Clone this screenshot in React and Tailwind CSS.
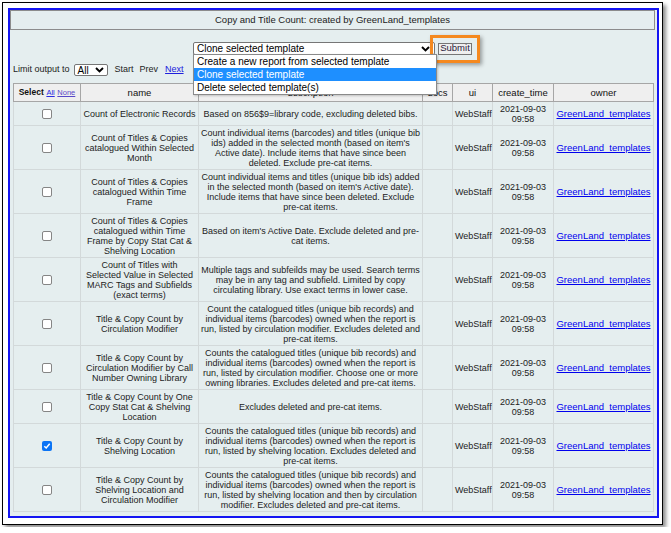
import React from 'react';

const rows = [
  {
    name: ['Count of Electronic Records'],
    desc: ['Based on 856$9=library code, excluding deleted bibs.'],
  },
  {
    name: ['Count of Titles & Copies', 'catalogued Within Selected', 'Month'],
    desc: [
      'Count individual items (barcodes) and titles (unique bib',
      "ids) added in the selected month (based on item's",
      'Active date). Include items that have since been',
      'deleted. Exclude pre-cat items.',
    ],
  },
  {
    name: ['Count of Titles & Copies', 'catalogued Within Time', 'Frame'],
    desc: [
      'Count individual items and titles (unique bib ids) added',
      "in the selected month (based on item's Active date).",
      'Include items that have since been deleted. Exclude',
      'pre-cat items.',
    ],
  },
  {
    name: ['Count of Titles & Copies', 'catalogued within Time', 'Frame by Copy Stat Cat &', 'Shelving Location'],
    desc: ["Based on item's Active Date. Exclude deleted and pre-", 'cat items.'],
  },
  {
    name: ['Count of Titles with', 'Selected Value in Selected', 'MARC Tags and Subfields', '(exact terms)'],
    desc: [
      'Multiple tags and subfeilds may be used. Search terms',
      'may be in any tag and subfield. Limited by copy',
      'circulating library. Use exact terms in lower case.',
    ],
  },
  {
    name: ['Title & Copy Count by', 'Circulation Modifier'],
    desc: [
      'Count the catalogued titles (unique bib records) and',
      'individual items (barcodes) owned when the report is',
      'run, listed by circulation modifier. Excludes deleted and',
      'pre-cat items.',
    ],
  },
  {
    name: ['Title & Copy Count by', 'Circulation Modifier by Call', 'Number Owning Library'],
    desc: [
      'Counts the catalogued titles (unique bib records) and',
      'individual items (barcodes) owned when the report is',
      'run, listed by circulation modifier. Choose one or more',
      'owning libraries. Excludes deleted and pre-cat items.',
    ],
  },
  {
    name: ['Title & Copy Count by One', 'Copy Stat Cat & Shelving', 'Location'],
    desc: ['Excludes deleted and pre-cat items.'],
  },
  {
    name: ['Title & Copy Count by', 'Shelving Location'],
    desc: [
      'Counts the catalogued titles (unique bib records) and',
      'individual items (barcodes) owned when the report is',
      'run, listed by shelving location. Excludes deleted and',
      'pre-cat items.',
    ],
    checked: true,
  },
  {
    name: ['Title & Copy Count by', 'Shelving Location and', 'Circulation Modifier'],
    desc: [
      'Counts the catalogued titles (unique bib records) and',
      'individual items (barcodes) owned when the report is',
      'run, listed by shelving location and then by circulation',
      'modifier. Excludes deleted and pre-cat items.',
    ],
  },
];

// row height by number of text lines
const rowH = { 2: 'h-[24px]', 3: 'h-[34px]', 4: 'h-[44px]' };

const Lines = ({ lines }) => (
  <>
    {lines.map((l, i) => (
      <div key={i} className="whitespace-nowrap">{l}</div>
    ))}
  </>
);

const Chevron = () => (
  <svg width="9" height="6" viewBox="0 0 9 6">
    <polyline points="1,1 4.5,4.5 8,1" fill="none" stroke="#000" strokeWidth="1.9" />
  </svg>
);

const Checkbox = ({ checked }) =>
  checked ? (
    <span className="inline-flex w-[10px] h-[10px] rounded-[2px] bg-[#0b74f5] items-center justify-center">
      <svg width="8" height="8" viewBox="0 0 8 8">
        <polyline points="1.3,4.2 3.2,6 6.7,1.8" fill="none" stroke="#fff" strokeWidth="1.5" />
      </svg>
    </span>
  ) : (
    <span className="inline-block w-[10px] h-[10px] rounded-[2px] border border-[#858585] bg-white" />
  );

const th = 'h-[18px] border border-[#a6a6a6] bg-[#efefef] font-normal text-[9.5px] leading-[12px] p-0 text-[#111]';
const td = 'border border-[#d3d9da] px-[2px] py-0 align-middle text-center';

export default function App() {
  return (
    <div className="p-[2px] bg-white font-['Liberation_Sans',Arial,sans-serif] text-[#222]">
      <div className="w-[661px] h-[523px] border border-black bg-white pl-[5px] pt-[5px] shadow-[3px_3px_4px_rgba(0,0,0,0.45)]">
        <div className="w-[651px] h-[510px] border-2 border-[#1414f2] bg-[#e5eeef]">
          <div className="h-[20px] mr-[2px] border border-[#8c8c8c] flex items-center justify-center text-[9.5px]">
            Copy and Title Count: created by GreenLand_templates
          </div>

          <div className="mt-[12px] mr-[2px] flex justify-center items-center gap-[3px]">
            <div className="relative w-[242px] h-[13px] border border-[#767676] rounded-[2px] bg-white flex items-center justify-between pl-[3px] pr-[4px] text-[10px] text-black">
              <span>Clone selected template</span>
              <Chevron />
              <div className="absolute left-[-1px] top-[11px] w-[244px] border border-[#8a8a8a] bg-white z-10 shadow-[1px_1px_2px_rgba(0,0,0,0.2)]">
                <div className="h-[13px] leading-[13px] pl-[3px]">Create a new report from selected template</div>
                <div className="h-[13px] leading-[13px] pl-[3px] bg-[#1e8fff] text-white">Clone selected template</div>
                <div className="h-[13px] leading-[13px] pl-[3px]">Delete selected template(s)</div>
              </div>
            </div>
            <div className="relative">
              <div className="w-[34px] h-[12px] border border-[#767676] bg-[#efefef] flex items-center justify-center text-[9.5px] text-[#2a1a3a]">
                Submit
              </div>
              <div className="absolute -inset-[8px] border-[3px] border-[#f5891f] shadow-[2px_2px_4px_rgba(0,0,0,0.35)]" />
            </div>
          </div>

          <div className="mt-[9px] ml-[3px] h-[12px] flex items-center text-[9px]">
            <span>Limit output to</span>
            <div className="ml-[4px] w-[34px] h-[12px] border border-[#767676] rounded-[2px] bg-white flex items-center justify-between pl-[3px] pr-[3px] text-[10px] text-black">
              <span>All</span>
              <Chevron />
            </div>
            <span className="ml-[7px]">Start</span>
            <span className="ml-[6px]">Prev</span>
            <a className="ml-[7px] text-[#2020dd] underline">Next</a>
          </div>

          <table className="mt-[7px] ml-[3px] w-[640px] table-fixed border-collapse text-[9px] leading-[10px]">
            <colgroup>
              <col className="w-[67px]" />
              <col className="w-[118px]" />
              <col className="w-[224px]" />
              <col className="w-[30px]" />
              <col className="w-[40px]" />
              <col className="w-[61px]" />
              <col className="w-[100px]" />
            </colgroup>
            <thead>
              <tr>
                <th className={th}>
                  <span className="font-bold text-[8.5px]">Select</span>{' '}
                  <a className="text-[7.5px] text-[#2a2ae0] underline">All</a>{' '}
                  <a className="text-[7.5px] text-[#5848c8] underline">None</a>
                </th>
                <th className={th}>name</th>
                <th className={th}>description</th>
                <th className={th}>docs</th>
                <th className={th}>ui</th>
                <th className={th}>create_time</th>
                <th className={th}>owner</th>
              </tr>
            </thead>
            <tbody>
              {rows.map((r, i) => {
                const n = Math.max(2, r.name.length, r.desc.length);
                return (
                  <tr key={i} className={rowH[n]}>
                    <td className={td}>
                      <div className="flex justify-center">
                        <Checkbox checked={r.checked} />
                      </div>
                    </td>
                    <td className={td}><Lines lines={r.name} /></td>
                    <td className={td}><Lines lines={r.desc} /></td>
                    <td className={td}></td>
                    <td className={td}>WebStaff</td>
                    <td className={td}><Lines lines={['2021-09-03', '09:58']} /></td>
                    <td className={td}>
                      <a className="text-[9.5px] text-[#0000ee] underline whitespace-nowrap">GreenLand_templates</a>
                    </td>
                  </tr>
                );
              })}
            </tbody>
          </table>
        </div>
      </div>
    </div>
  );
}
